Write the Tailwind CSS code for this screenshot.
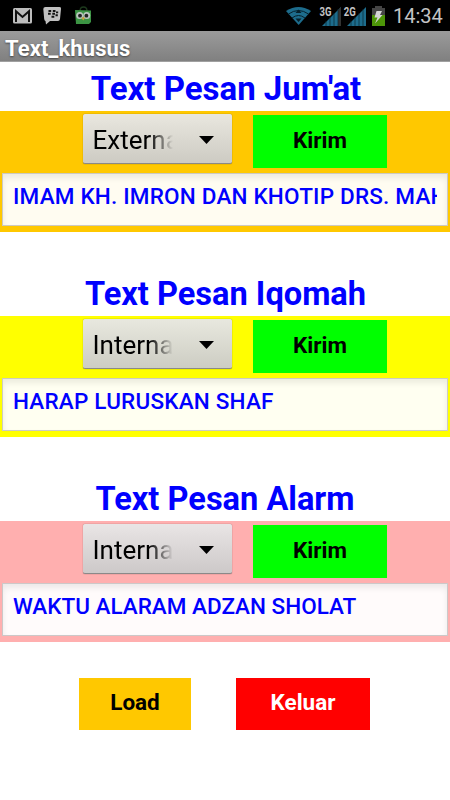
<!DOCTYPE html>
<html lang="id">
<head>
  <meta charset="UTF-8">
  <meta name="viewport" content="width=device-width, initial-scale=1.0">
  <title>Text_khusus</title>
  <script src="https://cdn.jsdelivr.net/npm/@tailwindcss/browser@4"></script>
</head>
<body class="bg-white font-['Roboto',sans-serif] h-[800px] overflow-hidden">
  <!-- Status bar -->
  <div class="h-[31px] bg-black flex items-center justify-between pl-[13px] pr-[7px]">
    <div class="flex items-center">
      <svg class="w-[19px] h-[16px]" viewBox="0 0 19 16">
        <rect width="19" height="15.5" rx="1.5" fill="#bdbdbd"/>
        <path d="M3 14V3.2L9.5 9L16 3.2V14" fill="none" stroke="#111" stroke-width="2"/>
      </svg>
      <svg class="w-[19px] h-[18px] ml-[11px] mt-[1px]" viewBox="0 0 19 18">
        <path d="M2.5 0H16.5Q18.5 0 18 2L17 12Q16.700 14 15 14H7L3 17.500L2.500 14Q1.500 14 1.200 12L.3 2Q.3 0 2.500 0Z" fill="#c0c0c0"/>
        <path d="M5.500 4H8.200M9.800 4H12.500M5 6.800H7.700M9.300 6.800H12M13 5.400H15.200M12.500 8.300H14.800M8.500 9.800H11.300" stroke="#111" stroke-width="1.900"/>
      </svg>
      <svg class="w-[17px] h-[19px] ml-[13px] mb-[1px]" viewBox="0 0 17 19">
        <path d="M5 5Q5 1 8.500 1T12 5" fill="none" stroke="#1d3a1d" stroke-width="1.300"/>
        <path d="M0 4L16 4.500V16L14 18H1Z" fill="#3c9444"/>
        <circle cx="4.700" cy="9.500" r="3.500" fill="#b9c5bd"/>
        <circle cx="11.700" cy="9.500" r="3.500" fill="#b9c5bd"/>
        <circle cx="5" cy="9.700" r="1.900" fill="#222"/>
        <circle cx="11.400" cy="9.700" r="1.900" fill="#222"/>
        <path d="M6.500 12L8.200 11L10 12L8.200 14.500Z" fill="#c9a13b"/>
      </svg>
    </div>
    <div class="flex items-center">
      <svg class="w-[100px] h-[22px] mr-[8px]" viewBox="285 4 100 22">
        <path d="M286 10Q298.500 2 311 10L298.700 24Z" fill="#1d6c8c"/>
        <path d="M288.500 13Q298.500 6 308.500 13M292 17Q298.500 12 305 17" fill="none" stroke="#06202b" stroke-width="1"/>
        <path d="M298.500 8.500L301.500 12H295.500ZM298.500 21L301.500 17.500H295.500Z" fill="#06202b"/>
        <path d="M322 25L341 6V25Z" fill="#1d6c8c"/>
        <path d="M338 9L341 6V25H338Z" fill="#333"/>
        <path d="M326 20V25M330 16V25M334 12V25M338 8V25" stroke="#08252f" stroke-width=".7"/>
        <path d="M347 25L366 6V25Z" fill="#1d6c8c"/>
        <path d="M351 20V25M355 16V25M359 12V25M363 8V25" stroke="#08252f" stroke-width=".7"/>
        <text x="319.500" y="14.500" font-size="12" font-weight="700" fill="#c4c4c4" textLength="12" lengthAdjust="spacingAndGlyphs">3G</text>
        <text x="343.700" y="14.500" font-size="12" font-weight="700" fill="#c4c4c4" textLength="12" lengthAdjust="spacingAndGlyphs">2G</text>
        <path d="M375 5H382V7H385V14H372V7H375Z" fill="#454545"/>
        <path d="M372 14H385V25H372Z" fill="#4d9608"/>
        <path d="M376.500 10H382L380 14H382.500L375 22.500L377.500 16.500H374.500Z" fill="#d5d5d5"/>
      </svg>
      <span class="text-[20px] leading-[31px] text-[#c4c4c4] w-[50px] pt-[1px] whitespace-nowrap">14:34</span>
    </div>
  </div>

  <!-- Title bar -->
  <div class="h-[31px] bg-linear-to-b from-[#9b9b9b] to-[#808080] border-b border-[#a0a0a0] pl-[5px]">
    <h1 class="text-[22px] leading-[35px] tracking-[0.1px] font-bold text-white text-shadow-[0_1px_2px_#444]">Text_khusus</h1>
  </div>

  <!-- Jum'at -->
  <section class="h-[205px]">
    <h2 class="h-[49px] pt-[2px] pl-[2px] text-[33px] leading-[49px] font-bold text-[#0000ff] text-center whitespace-nowrap">Text Pesan Jum'at</h2>
    <div class="h-[121px] bg-[#ffc800] px-[2px] pt-[3px]">
      <div class="flex h-[59px] pl-[80.5px]">
        <button class="flex items-center w-[149.5px] h-[50px] pl-[10px] rounded-[2px] border-b border-black/40 shadow-[0_0_1px_#0009] bg-linear-to-b from-[#e9e7df] to-[#cdcbc3] text-[26px] text-black">
          <span class="w-[80px] pt-[3px] overflow-hidden whitespace-nowrap text-left mask-r-from-70% mask-r-to-100%">External</span>
          <svg class="ml-[26px] mt-[3px] w-[15px] h-[8px]" viewBox="0 0 15 8"><path d="M0 0H15L7.500 8Z"/></svg>
        </button>
        <button class="ml-[21px] mt-[1px] w-[134px] h-[53px] pb-[2px] bg-[#00ff00] text-[22.5px] font-bold text-black">Kirim</button>
      </div>
      <div class="h-[53px] w-[446px] border border-black/20 bg-[#fffcf1] pl-[10px] pr-[10px] shadow-[inset_0_4px_6px_#00000014]">
        <p class="overflow-hidden whitespace-nowrap text-[22.5px] leading-[45px] tracking-[0.2px] font-medium text-[#0000ff]">IMAM KH. IMRON DAN KHOTIP DRS. MAHMUD</p>
      </div>
    </div>
  </section>

  <!-- Iqomah -->
  <section class="h-[205px]">
    <h2 class="h-[49px] pt-[3px] pl-[1px] text-[32.600px] leading-[49px] font-bold text-[#0000ff] text-center whitespace-nowrap">Text Pesan Iqomah</h2>
    <div class="h-[121px] bg-[#ffff00] px-[2px] pt-[3px]">
      <div class="flex h-[59px] pl-[80.5px]">
        <button class="flex items-center w-[149.5px] h-[50px] pl-[10px] rounded-[2px] border-b border-black/40 shadow-[0_0_1px_#0009] bg-linear-to-b from-[#e8e8df] to-[#cdcdc3] text-[26px] text-black">
          <span class="w-[80px] pt-[3px] overflow-hidden whitespace-nowrap text-left mask-r-from-70% mask-r-to-100%">Internal</span>
          <svg class="ml-[26px] mt-[3px] w-[15px] h-[8px]" viewBox="0 0 15 8"><path d="M0 0H15L7.500 8Z"/></svg>
        </button>
        <button class="ml-[21px] mt-[1px] w-[134px] h-[53px] pb-[2px] bg-[#00ff00] text-[22.5px] font-bold text-black">Kirim</button>
      </div>
      <div class="h-[53px] w-[446px] border border-black/20 bg-[#fffff1] pl-[10px] pr-[10px] shadow-[inset_0_4px_6px_#00000014]">
        <p class="overflow-hidden whitespace-nowrap text-[22.5px] leading-[45px] tracking-[0.2px] font-medium text-[#0000ff]">HARAP LURUSKAN SHAF</p>
      </div>
    </div>
  </section>

  <!-- Alarm -->
  <section class="h-[205px]">
    <h2 class="h-[49px] pt-[3px] text-[32.600px] leading-[49px] font-bold text-[#0000ff] text-center whitespace-nowrap">Text Pesan Alarm</h2>
    <div class="h-[121px] bg-[#ffafaf] px-[2px] pt-[3px]">
      <div class="flex h-[59px] pl-[80.5px]">
        <button class="flex items-center w-[149.5px] h-[50px] pl-[10px] rounded-[2px] border-b border-black/40 shadow-[0_0_1px_#0009] bg-linear-to-b from-[#e9e5e5] to-[#cdc9c9] text-[26px] text-black">
          <span class="w-[80px] pt-[3px] overflow-hidden whitespace-nowrap text-left mask-r-from-70% mask-r-to-100%">Internal</span>
          <svg class="ml-[26px] mt-[3px] w-[15px] h-[8px]" viewBox="0 0 15 8"><path d="M0 0H15L7.500 8Z"/></svg>
        </button>
        <button class="ml-[21px] mt-[1px] w-[134px] h-[53px] pb-[2px] bg-[#00ff00] text-[22.5px] font-bold text-black">Kirim</button>
      </div>
      <div class="h-[53px] w-[446px] border border-black/20 bg-[#fffbfb] pl-[10px] pr-[10px] shadow-[inset_0_4px_6px_#00000014]">
        <p class="overflow-hidden whitespace-nowrap text-[22.5px] leading-[45px] font-medium text-[#0000ff]">WAKTU ALARAM ADZAN SHOLAT</p>
      </div>
    </div>
  </section>

  <div class="flex gap-[45px] pl-[79px] pt-[0.5px]">
    <button class="w-[112px] h-[52.5px] pb-[2px] bg-[#ffc800] text-[22.5px] font-bold text-black">Load</button>
    <button class="w-[134px] h-[52.5px] pb-[2px] bg-[#ff0000] text-[22.5px] font-bold text-white">Keluar</button>
  </div>
</body>
</html>
